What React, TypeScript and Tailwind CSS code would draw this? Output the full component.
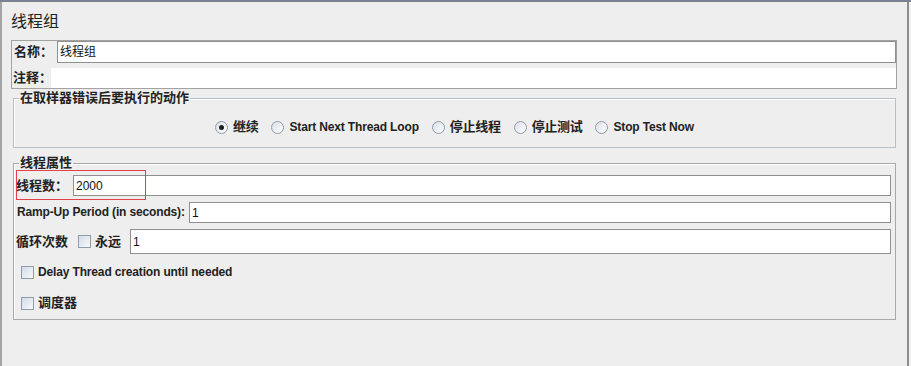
const cjk = "font-['Liberation_Sans','Noto_Sans_CJK_SC',sans-serif]"

function Radio({ label, checked = false, zh = false }: { label: string; checked?: boolean; zh?: boolean }) {
  return (
    <div className="flex items-center">
      <span className="w-[13px] h-[13px] rounded-full border border-[#8e9bab] bg-gradient-to-br from-[#d9dfe7] to-white flex items-center justify-center">
        {checked && <span className="w-[5px] h-[5px] rounded-full bg-[#1e1e1e]" />}
      </span>
      <span className={`ml-[5px] font-bold text-[#222] ${zh ? 'text-[13px] tracking-[-0.3px]' : 'text-[12px] tracking-[-0.15px]'}`}>{label}</span>
    </div>
  )
}

function Checkbox() {
  return (
    <span className="w-[13px] h-[13px] shrink-0 border border-[#8e9bab] bg-gradient-to-br from-[#d4dce7] to-[#f7f9fb]" />
  )
}

function Field({ value, className = '' }: { value?: string; className?: string }) {
  return (
    <div className={`flex-1 bg-white border border-[#8f8f8f] flex items-center pl-[2px] text-[12px] text-[#111] ${className}`}>
      {value}
    </div>
  )
}

export default function App() {
  return (
    <div className={`w-[911px] h-[366px] bg-[#eeeeee] border-t-2 border-[#7b8193] flex overflow-hidden ${cjk}`}>
      <div className="w-[907px] border-l-2 border-[#a4a4a4] flex flex-col pt-[10px]">
        <h1 className="pl-[9px] text-[16px] leading-[20px] text-[#222]">线程组</h1>

        <div className="pl-[9px] mt-[8px] w-[895px] flex flex-col">
          {/* name / comment */}
          <div className="border border-[#a3a3a3] flex flex-col">
            <div className="flex h-[22px]">
              <span className="w-[45px] pl-[2px] text-[13px] font-bold leading-[22px] text-[#222]">名称：</span>
              <Field value="线程组" className="border-[#8a8a8a]" />
            </div>
            <div className="flex mt-[5px] h-[20px]">
              <span className="w-[39px] pl-[1px] text-[13px] font-bold leading-[20px] text-[#222] whitespace-nowrap">注释：</span>
              <div className="flex-1 bg-white" />
            </div>
          </div>

          {/* sampler error action */}
          <fieldset className="mt-[2px] ml-[2px] w-[883px] border border-[#b7bec8] shadow-[inset_1px_1px_0_#ffffff]">
            <legend className="ml-[5px] px-[1px] text-[13px] leading-[14px] font-bold text-[#222]">在取样器错误后要执行的动作</legend>
            <div className="pt-[12px] pb-[10px]">
              <div className="h-[20px] flex items-center justify-center gap-[13px]">
                <Radio label="继续" checked zh />
                <Radio label="Start Next Thread Loop" />
                <Radio label="停止线程" zh />
                <Radio label="停止测试" zh />
                <Radio label="Stop Test Now" />
              </div>
            </div>
          </fieldset>

          {/* thread properties */}
          <fieldset className="mt-[8px] ml-[2px] w-[883px] border border-[#a8a8a8] shadow-[inset_1px_1px_0_#ffffff]">
            <legend className="ml-[5px] px-[1px] text-[13px] leading-[14px] font-bold text-[#222]">线程属性</legend>
            <div className="pt-[5px] pb-[6px] pr-[4px] flex flex-col text-[#222]">
              <div className="relative flex h-[21px]">
                <span className="w-[59px] pl-[2px] text-[13px] font-bold leading-[21px] whitespace-nowrap">线程数：</span>
                <Field value="2000" />
                <div className="absolute left-[2px] -top-[5px] w-[130px] h-[30px] border border-[#e2404c]" />
              </div>
              <div className="flex h-[21px] mt-[6px]">
                <span className="w-[175px] pl-[3px] text-[12px] tracking-[-0.15px] font-bold leading-[21px] whitespace-nowrap">Ramp-Up Period (in seconds):</span>
                <Field value="1" />
              </div>
              <div className="flex items-center h-[25px] mt-[6px]">
                <span className="w-[64px] pl-[2px] text-[13px] font-bold">循环次数</span>
                <Checkbox />
                <span className="w-[39px] pl-[4px] text-[13px] font-bold">永远</span>
                <Field value="1" className="h-[25px]" />
              </div>
              <div className="flex items-center h-[20px] mt-[8px] pl-[7px]">
                <Checkbox />
                <span className="ml-[4px] text-[12px] tracking-[-0.15px] font-bold">Delay Thread creation until needed</span>
              </div>
              <div className="flex items-center h-[20px] mt-[11px] pl-[7px]">
                <Checkbox />
                <span className="ml-[4px] text-[13px] font-bold">调度器</span>
              </div>
            </div>
          </fieldset>
        </div>
      </div>
      <div className="w-[4px] border-l-2 border-[#8c8c8c] bg-[#f2f2f2]" />
    </div>
  )
}
